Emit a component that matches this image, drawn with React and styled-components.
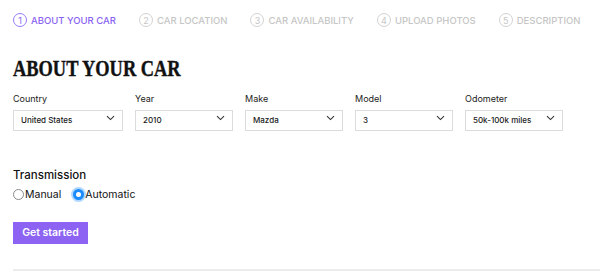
import styled, { createGlobalStyle } from "styled-components";

const GlobalStyle = createGlobalStyle`
  body {
    margin: 0;
    background: #fff;
    font-family: Inter, "Liberation Sans", Arial, sans-serif;
    color: #1a1a1a;
  }
`;

const steps = [
  "ABOUT YOUR CAR",
  "CAR LOCATION",
  "CAR AVAILABILITY",
  "UPLOAD PHOTOS",
  "DESCRIPTION",
];

const fields = [
  { label: "Country", value: "United States", wide: true },
  { label: "Year", value: "2010" },
  { label: "Make", value: "Mazda" },
  { label: "Model", value: "3" },
  { label: "Odometer", value: "50k-100k miles" },
];

function Chevron() {
  return (
    <svg width="9" height="6" viewBox="0 0 9 6" fill="none">
      <path d="M1 1.2 L4.5 4.6 L8 1.2" stroke="#333" strokeWidth="1.1" />
    </svg>
  );
}

export default function App() {
  return (
    <Page>
      <GlobalStyle />
      <Steps>
        {steps.map((s, i) => (
          <Step key={s} active={i === 0}>
            <Num active={i === 0}>{i + 1}</Num>
            {s}
          </Step>
        ))}
      </Steps>

      <Heading>ABOUT YOUR CAR</Heading>

      <Fields>
        {fields.map((f) => (
          <Field key={f.label} wide={f.wide}>
            <Label>{f.label}</Label>
            <SelectWrap>
              <Select defaultValue={f.value}>
                <option>{f.value}</option>
              </Select>
              <Arrow>
                <Chevron />
              </Arrow>
            </SelectWrap>
          </Field>
        ))}
      </Fields>

      <Transmission>Transmission</Transmission>
      <Radios>
        <RadioLabel>
          <Radio type="radio" name="trans" />
          Manual
        </RadioLabel>
        <RadioLabel>
          <Radio type="radio" name="trans" defaultChecked />
          Automatic
        </RadioLabel>
      </Radios>

      <Button>Get started</Button>
      <Divider />
    </Page>
  );
}

const Page = styled.div`
  padding: 0 0 0 13px;
  width: 600px;
  box-sizing: border-box;
`;

const Steps = styled.div`
  display: flex;
  align-items: center;
  gap: 23px;
  height: 40px;
`;

const Step = styled.div`
  display: flex;
  align-items: center;
  gap: 4px;
  font-size: 9.5px;
  font-weight: 500;
  color: ${(p) => (p.active ? "#8a63f2" : "#c6c6c6")};
  white-space: nowrap;
`;

const Num = styled.span`
  display: inline-flex;
  align-items: center;
  justify-content: center;
  width: 12px;
  height: 12px;
  border-radius: 50%;
  border: 1px solid ${(p) => (p.active ? "#9a7af4" : "#d2d2d2")};
  font-size: 9px;
  font-weight: 400;
`;

const Heading = styled.h1`
  margin: 17px 0 0;
  font-family: "Liberation Serif", "Times New Roman", serif;
  font-weight: 700;
  font-size: 23px;
  line-height: 23px;
  color: #111;
  -webkit-text-stroke: 0.4px #111;
  transform: scaleX(0.8);
  transform-origin: left;
`;

const Fields = styled.div`
  display: flex;
  gap: 12px;
  margin-top: 13px;
`;

const Field = styled.div`
  display: flex;
  flex-direction: column;
  width: ${(p) => (p.wide ? "110px" : "98px")};
`;

const Label = styled.label`
  font-size: 9px;
  color: #222;
  line-height: 11px;
  margin-bottom: 3px;
`;

const SelectWrap = styled.div`
  position: relative;
`;

const Select = styled.select`
  appearance: none;
  width: 100%;
  height: 21px;
  border: 1px solid #dcdcdc;
  border-radius: 0;
  background: #fff;
  padding: 0 0 0 7px;
  font-family: Inter, "Liberation Sans", Arial, sans-serif;
  font-size: 8px;
  font-weight: 500;
  color: #1a1a1a;
  outline: none;
`;

const Arrow = styled.span`
  position: absolute;
  right: 8px;
  top: 8px;
  display: flex;
  pointer-events: none;
`;

const Transmission = styled.div`
  margin-top: 37px;
  font-size: 11.5px;
  font-weight: 500;
  color: #111;
`;

const Radios = styled.div`
  display: flex;
  gap: 12px;
  margin-top: 6px;
`;

const RadioLabel = styled.label`
  display: flex;
  align-items: center;
  gap: 1px;
  font-size: 10.5px;
  color: #111;
`;

const Radio = styled.input`
  appearance: none;
  margin: 0;
  width: 11px;
  height: 11px;
  border-radius: 50%;
  border: 1px solid #8a8a8a;
  background: #fff;
  box-sizing: border-box;
  &:checked {
    border: 3px solid #1a8cff;
    background: #fff;
    box-shadow: 0 0 0 2px rgba(26, 140, 255, 0.35);
  }
`;

const Button = styled.button`
  display: block;
  margin-top: 21px;
  width: 75px;
  height: 22px;
  border: none;
  border-radius: 0;
  background: #8c63f2;
  color: #fff;
  font-family: Inter, "Liberation Sans", Arial, sans-serif;
  font-size: 10.5px;
  font-weight: 600;
`;

const Divider = styled.div`
  margin-top: 25px;
  height: 2px;
  background: #ececec;
`;
